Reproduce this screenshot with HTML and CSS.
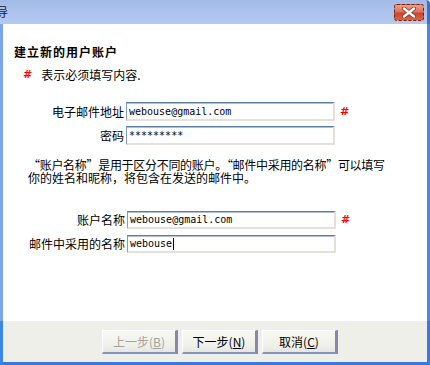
FILE: index.html
```html
<!DOCTYPE html>
<html lang="zh-CN">
<head>
<meta charset="utf-8">
<title>建立新的用户账户</title>
<link rel="stylesheet" href="styles.css">
</head>
<body>
<div class="window">
  <div class="titlebar">
    <span class="title">导</span>
    <span class="close">
      <svg width="14" height="11" viewBox="0 0 14 11">
        <path d="M2 1.5 L12 9.5 M12 1.5 L2 9.5" stroke="#7a3a2a" stroke-width="4" stroke-linecap="round"/>
        <path d="M2 1.5 L12 9.5 M12 1.5 L2 9.5" stroke="#ffffff" stroke-width="2.4" stroke-linecap="round"/>
      </svg>
    </span>
  </div>
  <div class="content">
    <h1 class="heading">建立新的用户账户</h1>
    <p class="note"><span class="req">#</span><span>表示必须填写内容.</span></p>
    <div class="form form-top">
      <span class="lbl">电子邮件地址</span><div class="field">webouse@gmail.com</div><span class="req">#</span>
      <span class="lbl">密码</span><div class="field">*********</div><span></span>
    </div>
    <p class="desc"><span class="line1">“账户名称”是用于区分不同的账户。“邮件中采用的名称”可以填写</span><br>你的姓名和昵称，将包含在发送的邮件中。</p>
    <div class="form form-bottom">
      <span class="lbl">账户名称</span><div class="field">webouse@gmail.com</div><span class="req">#</span>
      <span class="lbl">邮件中采用的名称</span><div class="field">webouse<span class="caret"></span></div><span></span>
    </div>
  </div>
  <div class="footer">
    <button class="btn" disabled>上一步(<u>B</u>)</button>
    <button class="btn">下一步(<u>N</u>)</button>
    <button class="btn">取消(<u>C</u>)</button>
  </div>
</div>
</body>
</html>
```

FILE: styles.css
```css
* { box-sizing: border-box; }
html, body { margin: 0; padding: 0; }
body {
  width: 430px;
  height: 365px;
  overflow: hidden;
  font-family: "Noto Sans CJK SC", "Noto Sans", sans-serif;
  font-size: 12px;
  color: #000;
  background: #fff;
}
.window {
  display: flex;
  flex-direction: column;
  width: 430px;
  height: 365px;
}
.titlebar {
  height: 24px;
  flex: none;
  display: flex;
  align-items: center;
  justify-content: space-between;
  padding-right: 6px;
  background: linear-gradient(#a3bbe8, #aec4ee 60%, #b6caef);
  border-right: 3px solid #3f6fc8;
  border-top-right-radius: 4px;
}
.title {
  margin-left: -4px;
  font-size: 12px;
  line-height: 14px;
  color: #101828;
}
.close {
  width: 30px;
  height: 17px;
  margin-right: -3px;
  display: flex;
  align-items: center;
  justify-content: center;
  border: 1px dashed #6b2414;
  border-radius: 3px;
  background: linear-gradient(#eba08a, #e0735a 45%, #c9472e 55%, #d8634a);
}
.close svg { display: block; }
.content {
  flex: 1;
  display: flex;
  flex-direction: column;
  background: #fff;
  border-left: 3px solid #7aa6e8;
  border-right: 3px solid #4f86e0;
}
.heading {
  margin: 21px 0 0 11px;
  font-size: 12px;
  line-height: 14px;
  font-weight: bold;
  letter-spacing: 1px;
}
.note {
  margin: 9px 0 0 20px;
  line-height: 14px;
  display: flex;
  align-items: center;
  gap: 9px;
}
.req {
  color: #ff0000;
  font-family: "DejaVu Sans", sans-serif;
  font-weight: bold;
  font-size: 11px;
  line-height: 12px;
}
.form {
  display: grid;
  grid-template-columns: 121px 209px auto;
  column-gap: 2px;
  align-items: center;
  justify-items: start;
}
.form .lbl { justify-self: end; line-height: 14px; }
.form .req { margin-left: 3px; }
.form-top { margin-top: 20px; row-gap: 5px; grid-auto-rows: 19px; }
.form-bottom { margin-top: 27px; row-gap: 6px; grid-auto-rows: 18px; grid-template-columns: 122px 209px auto; }
.field {
  width: 209px;
  height: 100%;
  display: flex;
  align-items: center;
  padding-left: 2px;
  font-family: "DejaVu Sans Mono", "Liberation Mono", monospace;
  font-size: 10px;
  background: #fff;
  border-style: solid;
  border-width: 1px 2px 2px 1px;
  border-color: #5a7ea6 #e3e1d9 #e3e1d9 #7f9db9;
  box-shadow: inset 0 1px 0 #aebfd2;
}
.caret {
  display: inline-block;
  width: 1px;
  height: 12px;
  background: #000;
  margin-left: 1px;
}
.desc {
  margin: 13px 0 0 25px;
  line-height: 13px;
  white-space: nowrap;
}
.desc .line1 { letter-spacing: -0.3px; }
.footer {
  height: 44px;
  flex: none;
  display: flex;
  align-items: flex-start;
  gap: 5px;
  padding: 9px 0 0 99px;
  background: #efefea;
  border-left: 3px solid #3c86e6;
  border-right: 3px solid #3c7ae0;
  border-bottom: 3px solid #3a78de;
}
.btn {
  width: 75px;
  height: 24px;
  padding: 0;
  font-family: "Noto Sans CJK SC", "Noto Sans", sans-serif;
  font-size: 12px;
  color: #000;
  background: linear-gradient(#f8f8f4, #f0f0ea 70%, #e6e5de);
  border-style: solid;
  border-width: 1px 2px 2px 1px;
  border-color: #ffffff #8a84a8 #7e95c2 #ffffff;
  box-shadow: 1px 0 0 #c77a5e;
}
.btn u { text-decoration: underline; }
.btn:disabled { color: #a3a39a; }
```
